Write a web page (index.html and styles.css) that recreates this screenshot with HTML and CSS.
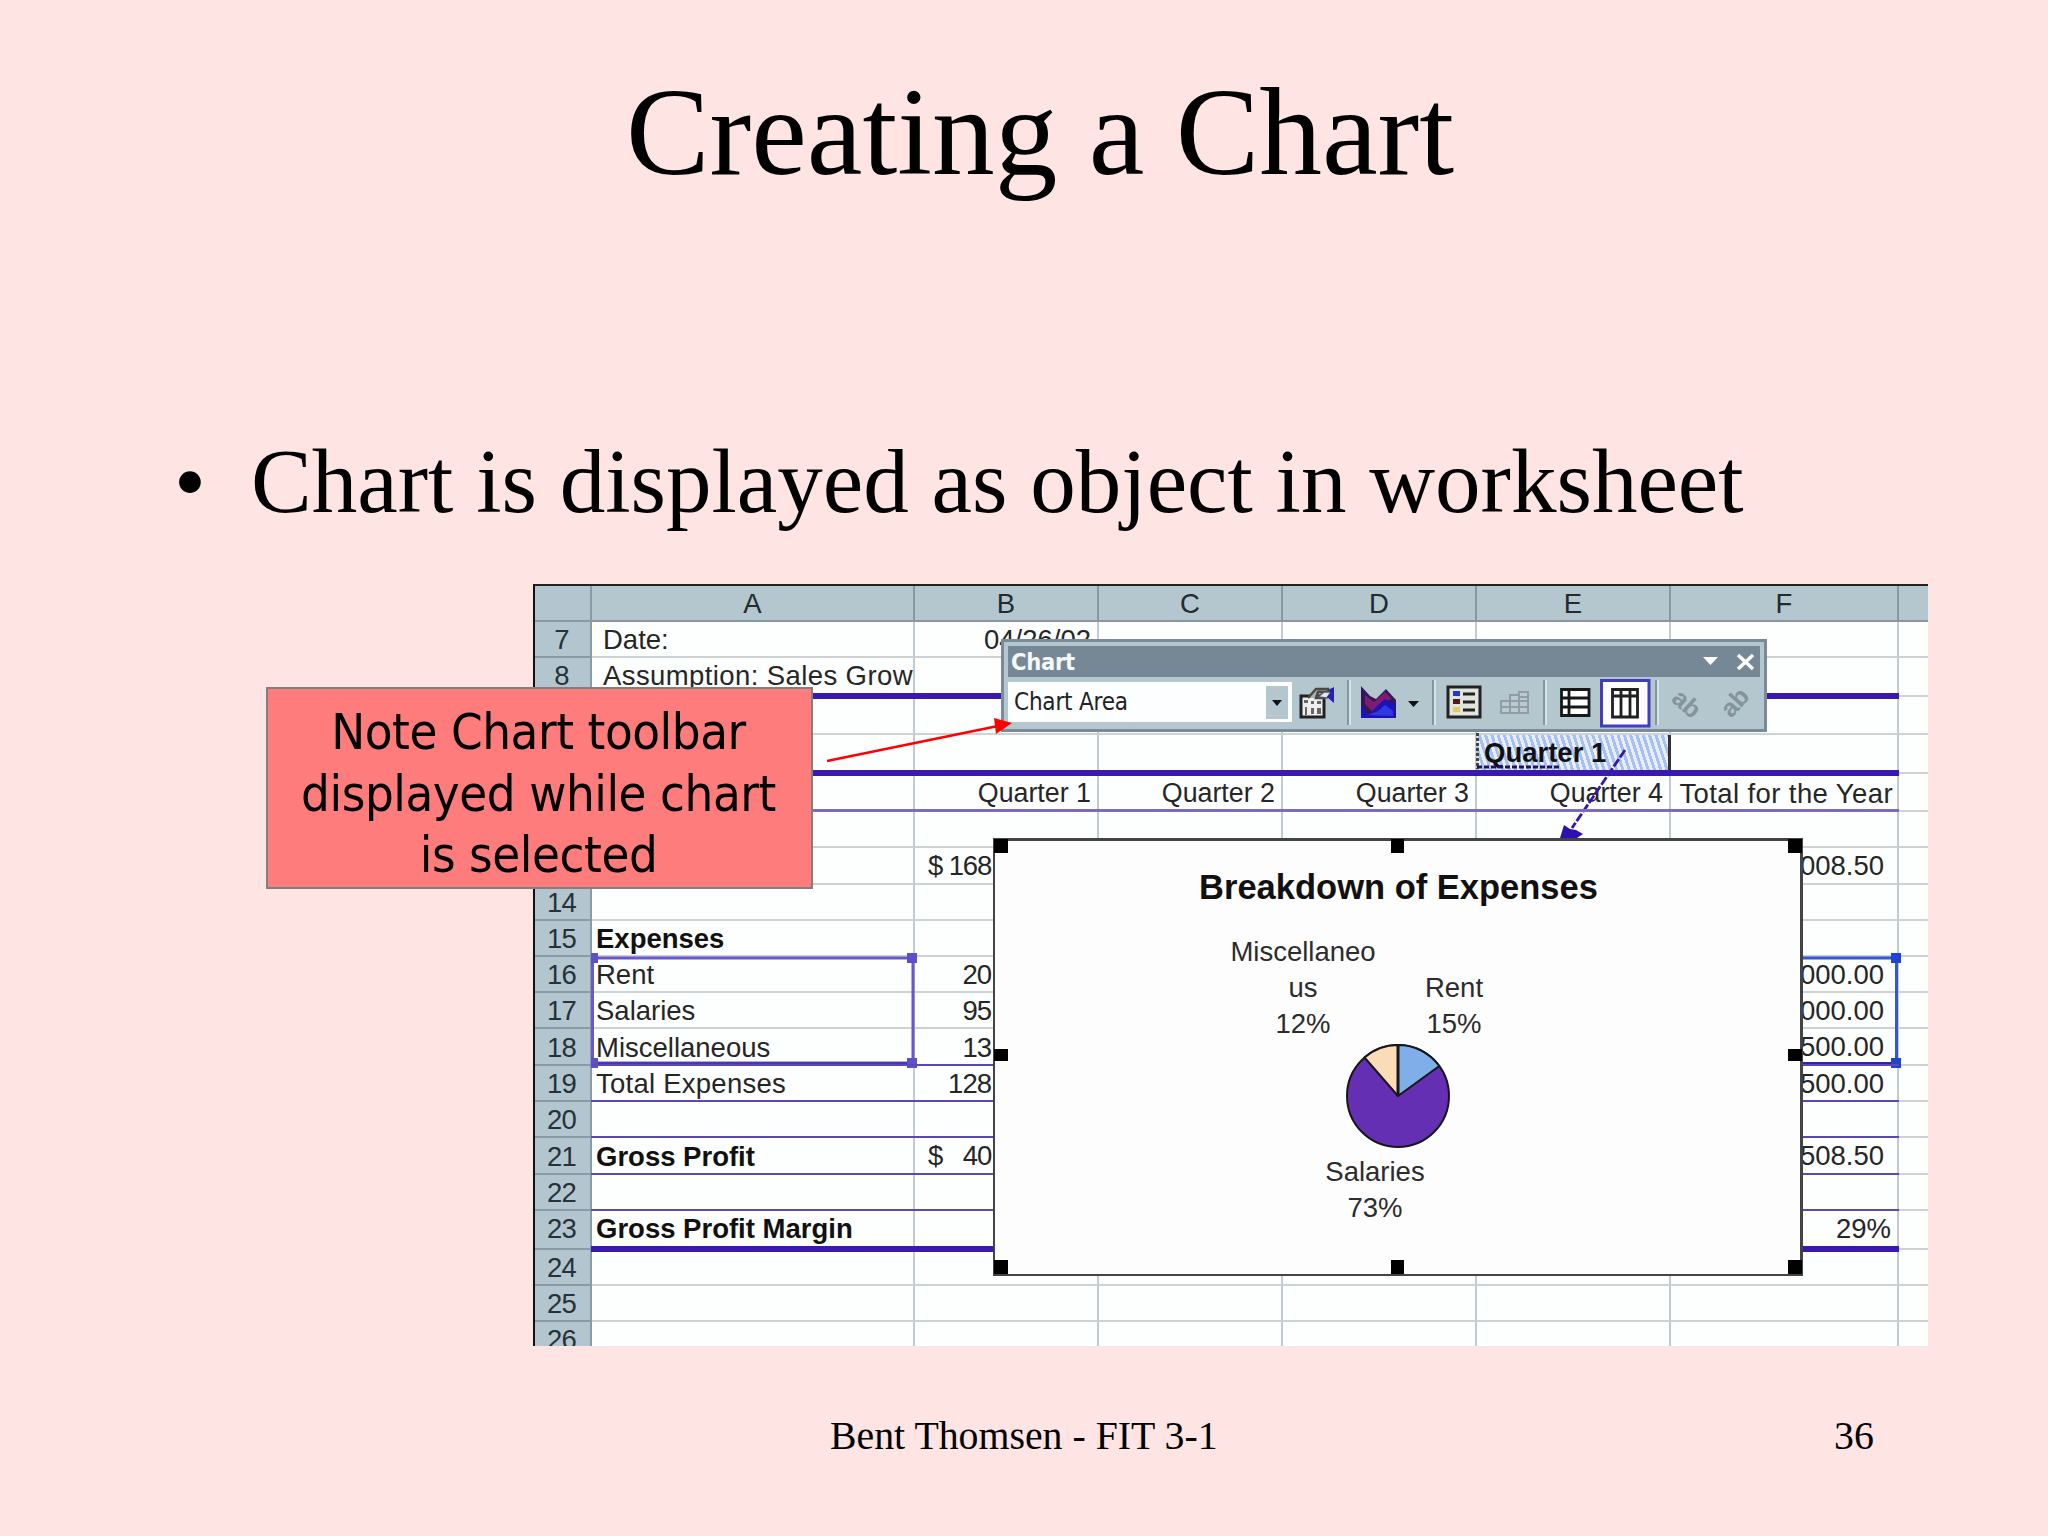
FILE: index.html
```html
<!DOCTYPE html>
<html lang="en">
<head>
<meta charset="utf-8">
<title>Creating a Chart</title>
<link rel="stylesheet" href="styles.css">
</head>
<body>
<main class="slide">
  <h1 class="title">Creating a Chart</h1>
  <ul class="bullets"><li><span class="dot">•</span><span>Chart is displayed as object in worksheet</span></li></ul>

  <section class="figure">
    <div class="sheet">
      <div class="row head"><b></b><i>A</i><i>B</i><i>C</i><i>D</i><i>E</i><i>F</i><i></i></div>
      <div class="row"><b>7</b><i class="in">Date:</i><i class="date">04/26/02</i><i></i><i></i><i></i><i></i><i></i></div>
      <div class="row h39 thick"><b>8</b><i class="in assume">Assumption: Sales Grow</i><i></i><i></i><i></i><i></i><i></i><i></i></div>
      <div class="row h38"><b></b><i></i><i></i><i></i><i></i><i></i><i></i><i></i></div>
      <div class="row h39 thick"><b></b><i></i><i></i><i></i><i></i><i class="picked"><strong>Quarter 1</strong></i><i></i><i></i></div>
      <div class="row h38 thin pale"><b></b><i></i><i class="q">Quarter 1</i><i class="q">Quarter 2</i><i class="q">Quarter 3</i><i class="q">Quarter 4</i><i class="q year">Total for the Year</i><i></i></div>
      <div class="row"><b></b><i></i><i></i><i></i><i></i><i></i><i></i><i></i></div>
      <div class="row h37"><b></b><i></i><i class="money"><span>$</span><span>168</span></i><i></i><i></i><i></i><i class="sum">008.50</i><i></i></div>
      <div class="row"><b>14</b><i></i><i></i><i></i><i></i><i></i><i></i><i></i></div>
      <div class="row"><b>15</b><i><strong>Expenses</strong></i><i></i><i></i><i></i><i></i><i></i><i></i></div>
      <div class="row"><b>16</b><i>Rent</i><i class="num">20</i><i></i><i></i><i></i><i class="sum">000.00</i><i></i></div>
      <div class="row"><b>17</b><i>Salaries</i><i class="num">95</i><i></i><i></i><i></i><i class="sum">000.00</i><i></i></div>
      <div class="row h37 thin"><b>18</b><i>Miscellaneous</i><i class="num">13</i><i></i><i></i><i></i><i class="sum">500.00</i><i></i></div>
      <div class="row thin"><b>19</b><i class="total">Total Expenses</i><i class="num">128</i><i></i><i></i><i></i><i class="sum">500.00</i><i></i></div>
      <div class="row thin"><b>20</b><i></i><i></i><i></i><i></i><i></i><i></i><i></i></div>
      <div class="row h37 thin"><b>21</b><i><strong>Gross Profit</strong></i><i class="money"><span>$</span><span>40</span></i><i></i><i></i><i></i><i class="sum">508.50</i><i></i></div>
      <div class="row thin"><b>22</b><i></i><i></i><i></i><i></i><i></i><i></i><i></i></div>
      <div class="row h39 thick"><b>23</b><i><strong>Gross Profit Margin</strong></i><i></i><i></i><i></i><i></i><i class="pct">29%</i><i></i></div>
      <div class="row"><b>24</b><i></i><i></i><i></i><i></i><i></i><i></i><i></i></div>
      <div class="row"><b>25</b><i></i><i></i><i></i><i></i><i></i><i></i><i></i></div>
      <div class="row"><b>26</b><i></i><i></i><i></i><i></i><i></i><i></i><i></i></div>
    </div>

    <!-- range outlines and the link from the dragged cell to the chart -->
    <svg class="overlay" width="1395" height="762" viewBox="533 584 1395 762">
      <g fill="none" stroke="#6858cc" stroke-width="3"><path d="M592.5 958H913V1063H592.500Z"/></g>
      <path d="M592 1064H913" stroke="#4a34bc" stroke-width="4"/>
      <g fill="#5c50c8"><path d="M591 953h7v10h-7zM907 953h10v10h-10zM591 1058h7v10h-7zM907 1058h10v10h-10z"/></g>
      <path d="M1803 958H1896.500V1063" fill="none" stroke="#3358d0" stroke-width="3"/>
      <path d="M1803 1064H1896" stroke="#3420a8" stroke-width="4"/>
      <path d="M1891 953h10v10h-10zM1891 1058h10v10h-10z" fill="#1f45d0"/>
      <path d="M1477 767H1560" stroke="#1c1460" stroke-width="3" stroke-dasharray="5 2"/>
      <path d="M1477.500 733V769" stroke="#444" stroke-width="3" stroke-dasharray="3 2"/>
      <path d="M1625 750L1572 828" stroke="#3418a8" stroke-width="2.800" stroke-dasharray="9 2"/>
      <path d="M1560 838L1564 825L1570 829L1576 830L1583 834L1577 838Z" fill="#2e10b0"/>
    </svg>

    <div class="chart">
      <h2>Breakdown of Expenses</h2>
      <p class="label misc">Miscellaneo<br>us<br>12%</p>
      <p class="label rent">Rent<br>15%</p>
      <svg class="pie" width="104" height="104" viewBox="-52 -52 104 104">
        <g stroke="#171717" stroke-width="2" stroke-linejoin="round">
          <circle r="51" fill="#642fb2"/>
          <path d="M0 0V-51A51 51 0 0 1 41.300 -30Z" fill="#80aee8"/>
          <path d="M0 0L-33.500 -38.500A51 51 0 0 1 0 -51Z" fill="#fbdcb8"/>
          <path d="M0 0V-51" stroke-width="3"/>
        </g>
      </svg>
      <p class="label sal">Salaries<br>73%</p>
      <svg class="grips" width="810" height="438" viewBox="993 838 810 438"><path d="M994 839h14v14h-14zM1391 839h13v14h-13zM1788 839h14v14h-14zM994 1049h14v12h-14zM1788 1049h14v12h-14zM994 1260h14v14h-14zM1391 1260h13v14h-13zM1788 1260h14v14h-14z"/></svg>
    </div>

    <div class="toolbar">
      <div class="bar"><span>Chart</span>
        <svg width="52" height="18" viewBox="0 0 52 18"><path d="M0 4H15L7.500 12Z" fill="#fff"/><path d="M35 2L50 16M50 2L35 16" stroke="#fff" stroke-width="3.500"/></svg>
      </div>
      <div class="tools">
        <div class="combo"><span>Chart Area</span><em></em></div>
        <!-- drawn on the same axes as the button strip, x from 1292, y from 677 -->
        <svg class="buttons" width="468" height="52" viewBox="1292 677 468 52">
          <g stroke="#8496a2" stroke-width="2"><path d="M1348 680V725M1433 680V725M1544 680V725M1656 680V725"/></g>
          <g stroke="#d7e3e8" stroke-width="2"><path d="M1350 680V725M1435 680V725M1546 680V725M1658 680V725"/></g>
          <g>
            <path d="M1301 696H1324V717H1301Z" fill="#eee" stroke="#222" stroke-width="3"/>
            <path d="M1304 700h4v3h-4zM1311 701h3v3h-3zM1317 701h4v3h-4zM1305 707h2v8h-2zM1311 708h3v6h-3zM1317 708h4v6h-4z" fill="#666"/>
            <path d="M1308 698L1316 689H1328V692H1318L1316 698H1325" fill="#aab4b4" stroke="#4a4a44" stroke-width="2.500"/>
            <path d="M1318 697L1324 692H1331L1327 698Z" fill="#e4e8f0" stroke="#556" stroke-width="1.500"/>
            <path d="M1328 690L1334 687V703L1327 697L1331 693Z" fill="#2620b0"/>
          </g>
          <path d="M1361 686L1370 696L1376 699L1386 689L1396 700V718H1361Z" fill="#30185c"/>
          <path d="M1365 695L1374 702L1385 692L1392 699L1383 702L1372 711L1365 704Z" fill="#801c70"/>
          <path d="M1364 710L1369 715L1378 705L1385 699L1395 705V718H1361V704Z" fill="#1c12b8"/>
          <path d="M1368 715L1378 711L1385 705L1393 711V716Z" fill="#3038e0"/>
          <path d="M1408 701H1419L1413.500 707Z" fill="#111"/>
          <g><path d="M1448 687H1480V717H1448Z" fill="#dfe4dc" stroke="#222" stroke-width="3"/>
            <path d="M1453 691h7v5h-7z" fill="#2638c8"/><path d="M1453 699h7v5h-7z" fill="#501820"/><path d="M1453 707h7v5h-7z" fill="#e6c860"/>
            <path d="M1463 694H1475M1463 702H1475M1463 710H1475" stroke="#222" stroke-width="3"/></g>
          <path d="M1501 713V701H1510V695H1519V692H1528V713ZM1501 707H1528M1510 701H1528M1519 697H1528M1510 701V713M1519 695V713" fill="#bcc9cf" stroke="#909ea7" stroke-width="2"/>
          <path d="M1561.500 689.500H1589V715.500H1561.500ZM1569 689V716M1562 698H1589M1562 707H1589" fill="#fff" stroke="#181818" stroke-width="2.800"/>
          <path d="M1601.500 680.500H1649V726H1601.500Z" fill="#fcfcff" stroke="#443cc0" stroke-width="3"/>
          <path d="M1612.500 689.500H1637.500V717H1612.500ZM1612 696H1638M1621 689V717M1630 689V717" fill="#fff" stroke="#202020" stroke-width="2.800"/>
          <g class="slant" text-anchor="middle"><text transform="translate(1681 710) rotate(42)">ab</text><text transform="translate(1741 708) rotate(-48)">ab</text></g>
        </svg>
      </div>
    </div>

    <svg class="overlay pointer" width="1395" height="762" viewBox="533 584 1395 762">
      <path d="M827 761L998 726" stroke="#f00" stroke-width="2.500"/><path d="M994 718L1012 723L996 734Z" fill="#f00"/>
    </svg>
    <p class="note">Note Chart toolbar<br>displayed while chart<br>is selected</p>
  </section>

  <footer class="footer"><span></span><span>Bent Thomsen - FIT 3-1</span><span class="page">36</span></footer>
</main>
</body>
</html>
```
FILE: styles.css
```css
* { box-sizing: border-box; }
body { margin: 0; background: #ffe4e4; color: #000; }
h1, h2, p, ul { margin: 0; padding: 0; font-weight: normal; }
.slide {
  display: flex; flex-direction: column;
  width: 2048px; height: 1536px; padding-top: 62px; overflow: hidden;
  background: #ffe4e4;
  font-family: "Liberation Serif", "Times New Roman", serif;
}
.title { padding-left: 32px; text-align: center; font-size: 125.3px; line-height: 140px; }
.bullets { margin-top: 228px; list-style: none; font-size: 91.1px; line-height: 104px; }
.bullets li { display: flex; }
.dot { width: 251px; padding-left: 174px; }
.figure { position: relative; width: 1395px; height: 762px; margin: 50px 0 0 533px; }
.overlay { position: absolute; left: 0; top: 0; overflow: visible; }
.pointer { z-index: 5; }

/* worksheet */
.sheet {
  height: 762px; overflow: hidden; background: #fdfefe;
  border-left: 2px solid #111; border-top: 2px solid #222;
  font-family: "Liberation Sans", Arial, sans-serif; font-size: 27.5px; color: #262626;
}
.row {
  position: relative; display: grid; height: 36px;
  grid-template-columns: 57px 323px 184px 184px 194px 194px 228px 29px;
}
.h37 { height: 37px; }
.h38 { height: 38px; }
.h39 { height: 39px; }
.row > * {
  display: flex; align-items: flex-end; min-width: 0; padding-left: 4px;
  font-style: normal; font-weight: normal; white-space: nowrap; line-height: 33px;
  border-right: 2px solid #c3cbd0; border-bottom: 2px solid #cdd2d4;
}
.row > :last-child { border-right: 0; }
.row > b {
  justify-content: center; padding: 0 2px 0 0; background: #b3c6cf; color: #26323a;
  border-color: #8b9ba5; letter-spacing: -.8px;
}
.head > * { justify-content: center; background: #b4c7cf; border-color: #8797a1; padding: 0; color: #222b30; }
.thick > *, .thick > b { padding-bottom: 3px; }
.row .in { padding-left: 11px; }
.row .assume { letter-spacing: .4px; }
.row .total { letter-spacing: .25px; }
.row .date { justify-content: flex-end; padding-right: 6px; }
.row .q { justify-content: flex-end; padding-right: 6px; font-size: 26.8px; }
.row .year { padding-right: 4px; font-size: 27.5px; letter-spacing: .4px; }
.row .num { justify-content: flex-end; padding-right: 106px; letter-spacing: -1px; }
.row .money { justify-content: space-between; padding: 0 106px 1px 13px; letter-spacing: -1.2px; }
.row .sum { justify-content: flex-end; padding-right: 13px; }
.h37 > .sum { padding-bottom: 1px; }
.row .pct { justify-content: flex-end; padding-right: 6px; }
.row strong { color: #111; }
.row .picked {
  padding: 0 0 3px 7px; border-right: 3px solid #333;
  background: repeating-linear-gradient(72deg, #a9c0ee 0 3px, #e6eefb 3px 6px);
}
.thick::after, .thin::after {
  content: ""; position: absolute; left: 56px; bottom: -2px;
  width: 1308px; height: 6px; background: #3a18b2; z-index: 1;
}
.thin::after { height: 2px; bottom: 0; background: #5c46b8; }
.pale::after { background: #7f6cb8; height: 3px; }

/* chart object */
.chart {
  position: absolute; left: 460px; top: 254px; width: 810px; height: 438px;
  background: #fdfdfd; border: 3px solid #444; border-width: 3px 3px 2px 2px; z-index: 2;
  font-family: "Liberation Sans", Arial, sans-serif; color: #2c2c2c;
}
.chart h2 { padding: 26px 0 0 2px; text-align: center; font-size: 34.5px; line-height: 40px; font-weight: bold; color: #111; }
.label { position: absolute; width: 160px; text-align: center; font-size: 27.5px; line-height: 36px; }
.misc { left: 228px; top: 93px; }
.rent { left: 379px; top: 129px; }
.sal { left: 300px; top: 313px; }
.pie { position: absolute; left: 351px; top: 203px; }
.grips { position: absolute; left: -2px; top: -3px; }

/* floating toolbar */
.toolbar {
  position: absolute; left: 468px; top: 55px; width: 766px; height: 93px; z-index: 3;
  padding: 4px; border: 3px solid #7a8a96; background: #b4c6ce;
  font-family: "DejaVu Sans Condensed", "DejaVu Sans", sans-serif;
}
.bar {
  display: flex; justify-content: space-between; align-items: center; height: 31px; padding: 0 5px 0 3px;
  background: #768896; color: #f4f8fc; font-size: 23.5px; font-weight: bold; letter-spacing: -.3px; line-height: 31px;
}
.bar span { padding-top: 2px; }
.tools { display: flex; height: 50px; }
.combo {
  display: flex; justify-content: space-between; width: 284px; height: 40px; margin-top: 5px;
  padding: 4px 4px 3px 6px; background: #fdfeff; color: #222; font-size: 24px; letter-spacing: -.2px; line-height: 32px;
}
.combo em { width: 22px; background: #b4c6ce; position: relative; }
.combo em::after { content: ""; position: absolute; left: 6px; top: 14px; border: 5.5px solid transparent; border-top: 6px solid #111; }
.slant { font: bold 25px "Liberation Sans", Arial, sans-serif; fill: #84939c; }

/* callout */
.note {
  position: absolute; left: -267px; top: 103px; width: 547px; height: 202px; padding: 12px 2px 0 0; z-index: 4;
  background: #ff7c7c; border: 2px solid #808080; text-align: center; white-space: nowrap;
  font-family: "DejaVu Sans Condensed", "DejaVu Sans", sans-serif; font-size: 50.5px; line-height: 61.7px; letter-spacing: -.45px;
}
.footer { display: grid; grid-template-columns: 830px 1004px auto; margin-top: 67px; font-size: 39.8px; line-height: 46px; }
```
